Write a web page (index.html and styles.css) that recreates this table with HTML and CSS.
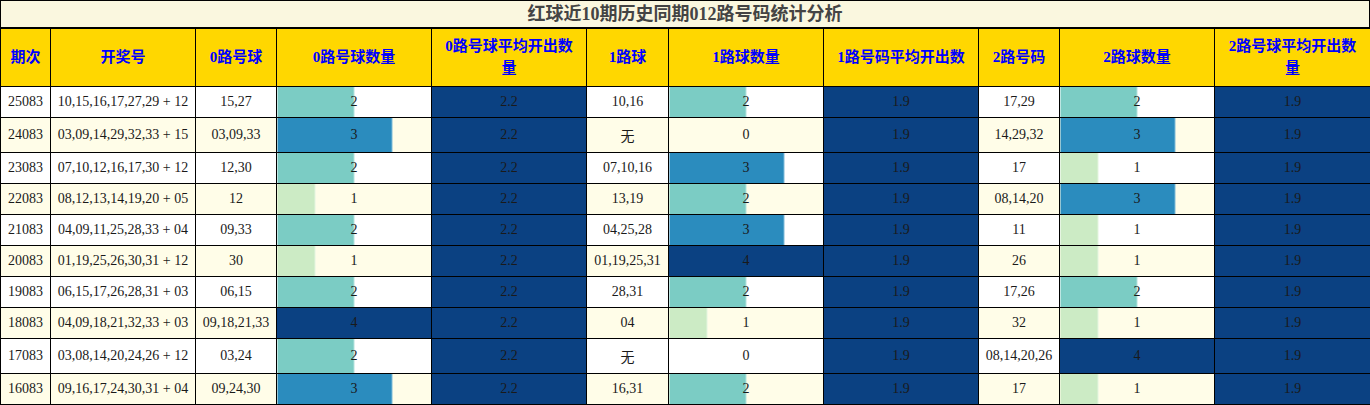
FILE: index.html
```html
<!DOCTYPE html>
<html lang="zh-CN">
<head>
<meta charset="utf-8">
<title>红球近10期历史同期012路号码统计分析</title>
<link rel="stylesheet" href="styles.css">
</head>
<body>
<div class="report">
  <div class="title">红球近10期历史同期012路号码统计分析</div>
  <table class="stats">
    <colgroup>
      <col class="c-issue"><col class="c-draw"><col class="c-num"><col class="c-bar"><col class="c-avg">
      <col class="c-num1"><col class="c-bar"><col class="c-avg"><col class="c-num"><col class="c-bar"><col class="c-avg-last">
    </colgroup>
    <thead>
      <tr>
        <th>期次</th><th>开奖号</th><th>0路号球</th><th>0路号球数量</th><th>0路号球平均开出数量</th>
        <th>1路球</th><th>1路球数量</th><th>1路号码平均开出数</th><th>2路号码</th><th>2路球数量</th><th>2路号球平均开出数量</th>
      </tr>
    </thead>
    <tbody>
      <tr>
        <td>25083</td><td>10,15,16,17,27,29 + 12</td><td>15,27</td><td class="bar v2" style="--w:50%">2</td><td class="avg">2.2</td>
        <td>10,16</td><td class="bar v2" style="--w:50%">2</td><td class="avg">1.9</td><td>17,29</td><td class="bar v2" style="--w:50%">2</td><td class="avg">1.9</td>
      </tr>
      <tr>
        <td>24083</td><td>03,09,14,29,32,33 + 15</td><td>03,09,33</td><td class="bar v3" style="--w:75%">3</td><td class="avg">2.2</td>
        <td class="none">无</td><td class="bar v0" style="--w:0%">0</td><td class="avg">1.9</td><td>14,29,32</td><td class="bar v3" style="--w:75%">3</td><td class="avg">1.9</td>
      </tr>
      <tr>
        <td>23083</td><td>07,10,12,16,17,30 + 12</td><td>12,30</td><td class="bar v2" style="--w:50%">2</td><td class="avg">2.2</td>
        <td>07,10,16</td><td class="bar v3" style="--w:75%">3</td><td class="avg">1.9</td><td>17</td><td class="bar v1" style="--w:25%">1</td><td class="avg">1.9</td>
      </tr>
      <tr>
        <td>22083</td><td>08,12,13,14,19,20 + 05</td><td>12</td><td class="bar v1" style="--w:25%">1</td><td class="avg">2.2</td>
        <td>13,19</td><td class="bar v2" style="--w:50%">2</td><td class="avg">1.9</td><td>08,14,20</td><td class="bar v3" style="--w:75%">3</td><td class="avg">1.9</td>
      </tr>
      <tr>
        <td>21083</td><td>04,09,11,25,28,33 + 04</td><td>09,33</td><td class="bar v2" style="--w:50%">2</td><td class="avg">2.2</td>
        <td>04,25,28</td><td class="bar v3" style="--w:75%">3</td><td class="avg">1.9</td><td>11</td><td class="bar v1" style="--w:25%">1</td><td class="avg">1.9</td>
      </tr>
      <tr>
        <td>20083</td><td>01,19,25,26,30,31 + 12</td><td>30</td><td class="bar v1" style="--w:25%">1</td><td class="avg">2.2</td>
        <td>01,19,25,31</td><td class="bar v4" style="--w:100%">4</td><td class="avg">1.9</td><td>26</td><td class="bar v1" style="--w:25%">1</td><td class="avg">1.9</td>
      </tr>
      <tr>
        <td>19083</td><td>06,15,17,26,28,31 + 03</td><td>06,15</td><td class="bar v2" style="--w:50%">2</td><td class="avg">2.2</td>
        <td>28,31</td><td class="bar v2" style="--w:50%">2</td><td class="avg">1.9</td><td>17,26</td><td class="bar v2" style="--w:50%">2</td><td class="avg">1.9</td>
      </tr>
      <tr>
        <td>18083</td><td>04,09,18,21,32,33 + 03</td><td>09,18,21,33</td><td class="bar v4" style="--w:100%">4</td><td class="avg">2.2</td>
        <td>04</td><td class="bar v1" style="--w:25%">1</td><td class="avg">1.9</td><td>32</td><td class="bar v1" style="--w:25%">1</td><td class="avg">1.9</td>
      </tr>
      <tr>
        <td>17083</td><td>03,08,14,20,24,26 + 12</td><td>03,24</td><td class="bar v2" style="--w:50%">2</td><td class="avg">2.2</td>
        <td class="none">无</td><td class="bar v0" style="--w:0%">0</td><td class="avg">1.9</td><td>08,14,20,26</td><td class="bar v4" style="--w:100%">4</td><td class="avg">1.9</td>
      </tr>
      <tr>
        <td>16083</td><td>09,16,17,24,30,31 + 04</td><td>09,24,30</td><td class="bar v3" style="--w:75%">3</td><td class="avg">2.2</td>
        <td>16,31</td><td class="bar v2" style="--w:50%">2</td><td class="avg">1.9</td><td>17</td><td class="bar v1" style="--w:25%">1</td><td class="avg">1.9</td>
      </tr>
    </tbody>
  </table>
</div>
</body>
</html>
```

FILE: styles.css
```css
html, body {
  margin: 0;
  padding: 0;
  background: #ffffff;
}

.report {
  width: 1370px;
  font-family: "Liberation Serif", "Noto Sans CJK SC", serif;
  color: #1a1a1a;
}

.title {
  box-sizing: border-box;
  height: 28px;
  border: 1px solid #000;
  background: #faf7df;
  color: #444444;
  font-size: 18px;
  font-weight: bold;
  line-height: 26px;
  text-align: center;
}

.stats {
  width: 1370px;
  table-layout: fixed;
  border-collapse: collapse;
  font-size: 14px;
}

.c-issue { width: 50px; }
.c-draw { width: 145px; }
.c-num { width: 81px; }
.c-num1 { width: 82px; }
.c-bar { width: 155px; }
.c-avg { width: 155px; }
.c-avg-last { width: 156px; }

.stats th,
.stats td {
  border: 1px solid #000;
  text-align: center;
  vertical-align: middle;
}

.stats td {
  padding: 7px 0;
  white-space: nowrap;
}

.stats th {
  background: #ffd700;
  color: #0000ff;
  font-size: 15px;
  font-weight: bold;
  line-height: 21.5px;
  padding: 7px 7px;
}

.stats tbody tr:nth-child(odd) td {
  background-color: #ffffff;
}

.stats tbody tr:nth-child(even) td {
  background-color: #fffde8;
}

.stats tbody tr td.avg {
  background-color: #0b4182;
}

.stats td.bar {
  background-image: linear-gradient(to right, var(--c) calc(var(--w) - 1px), var(--c2) calc(var(--w) - 1px), var(--c2) var(--w), transparent var(--w));
}

.stats td.v0 { --c: transparent; --c2: transparent; }
.stats td.v1 { --c: #ccebc5; --c2: #e3f4df; }
.stats td.v2 { --c: #7bccc4; --c2: #b3e2dd; }
.stats td.v3 { --c: #2b8cbe; --c2: #7dbad8; }
.stats td.v4 { --c: #0b4182; --c2: #0b4182; }

.stats td.none {
  font-family: "Noto Sans CJK SC", sans-serif;
}
```
